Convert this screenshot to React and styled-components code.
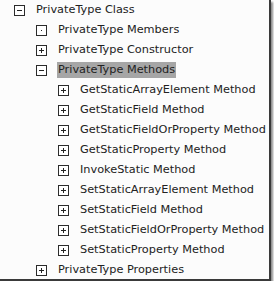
import styled, { createGlobalStyle } from "styled-components";

const GlobalStyle = createGlobalStyle`
  html, body {
    margin: 0;
    padding: 0;
    background: #ffffff;
    overflow: hidden;
  }
`;

const nodes = [
  { level: 0, label: "PrivateType Class", state: "open" },
  { level: 1, label: "PrivateType Members", state: "leaf" },
  { level: 1, label: "PrivateType Constructor", state: "closed" },
  { level: 1, label: "PrivateType Methods", state: "open", selected: true },
  { level: 2, label: "GetStaticArrayElement Method", state: "closed" },
  { level: 2, label: "GetStaticField Method", state: "closed" },
  { level: 2, label: "GetStaticFieldOrProperty Method", state: "closed" },
  { level: 2, label: "GetStaticProperty Method", state: "closed" },
  { level: 2, label: "InvokeStatic Method", state: "closed" },
  { level: 2, label: "SetStaticArrayElement Method", state: "closed" },
  { level: 2, label: "SetStaticField Method", state: "closed" },
  { level: 2, label: "SetStaticFieldOrProperty Method", state: "closed" },
  { level: 2, label: "SetStaticProperty Method", state: "closed" },
  { level: 1, label: "PrivateType Properties", state: "closed" },
];

// little expand / collapse square in front of each node
function Toggle({ state }) {
  return (
    <ToggleBox>
      <svg width="11" height="11" viewBox="0 0 11 11">
        <rect x="0.5" y="0.5" width="10" height="10" fill="#fff" stroke="#2b2b2b" />
        {state === "leaf" && <rect x="5" y="5" width="1" height="1" fill="#222" />}
        {state !== "leaf" && <rect x="3" y="5" width="5" height="1" fill="#222" />}
        {state === "closed" && <rect x="5" y="3" width="1" height="5" fill="#222" />}
      </svg>
    </ToggleBox>
  );
}

function App() {
  return (
    <>
      <GlobalStyle />
      <Frame>
        <Tree>
          {nodes.map((node) => (
            <Row key={node.label} $level={node.level}>
              <Toggle state={node.state} />
              <Label $selected={node.selected}>{node.label}</Label>
            </Row>
          ))}
        </Tree>
      </Frame>
    </>
  );
}

export default App;

const Frame = styled.div`
  box-sizing: border-box;
  width: 271px;
  height: 281px;
  background: #fcfcfc;
  border-right: 2px solid #3a3a3a;
  border-bottom: 2px solid #3a3a3a;
  box-shadow: 2px 2px 2px rgba(0, 0, 0, 0.45);
  overflow: hidden;
`;

const Tree = styled.div`
  display: grid;
  grid-template-rows: repeat(14, 20px);
  font-family: "DejaVu Sans", Verdana, sans-serif;
  font-size: 11.3px;
  line-height: 14px;
  color: #222222;
`;

const Row = styled.div`
  display: flex;
  align-items: center;
  height: 20px;
  overflow: hidden;
  padding-left: ${(p) => 14 + p.$level * 22}px;
  white-space: nowrap;
`;

const ToggleBox = styled.div`
  display: flex;
  width: 11px;
  height: 11px;
  margin-right: 11px;
  flex-shrink: 0;
`;

const Label = styled.span`
  padding: 1px 1px 1px;
  margin-left: -1px;
  background: ${(p) => (p.$selected ? "#a6a6a6" : "transparent")};
`;
